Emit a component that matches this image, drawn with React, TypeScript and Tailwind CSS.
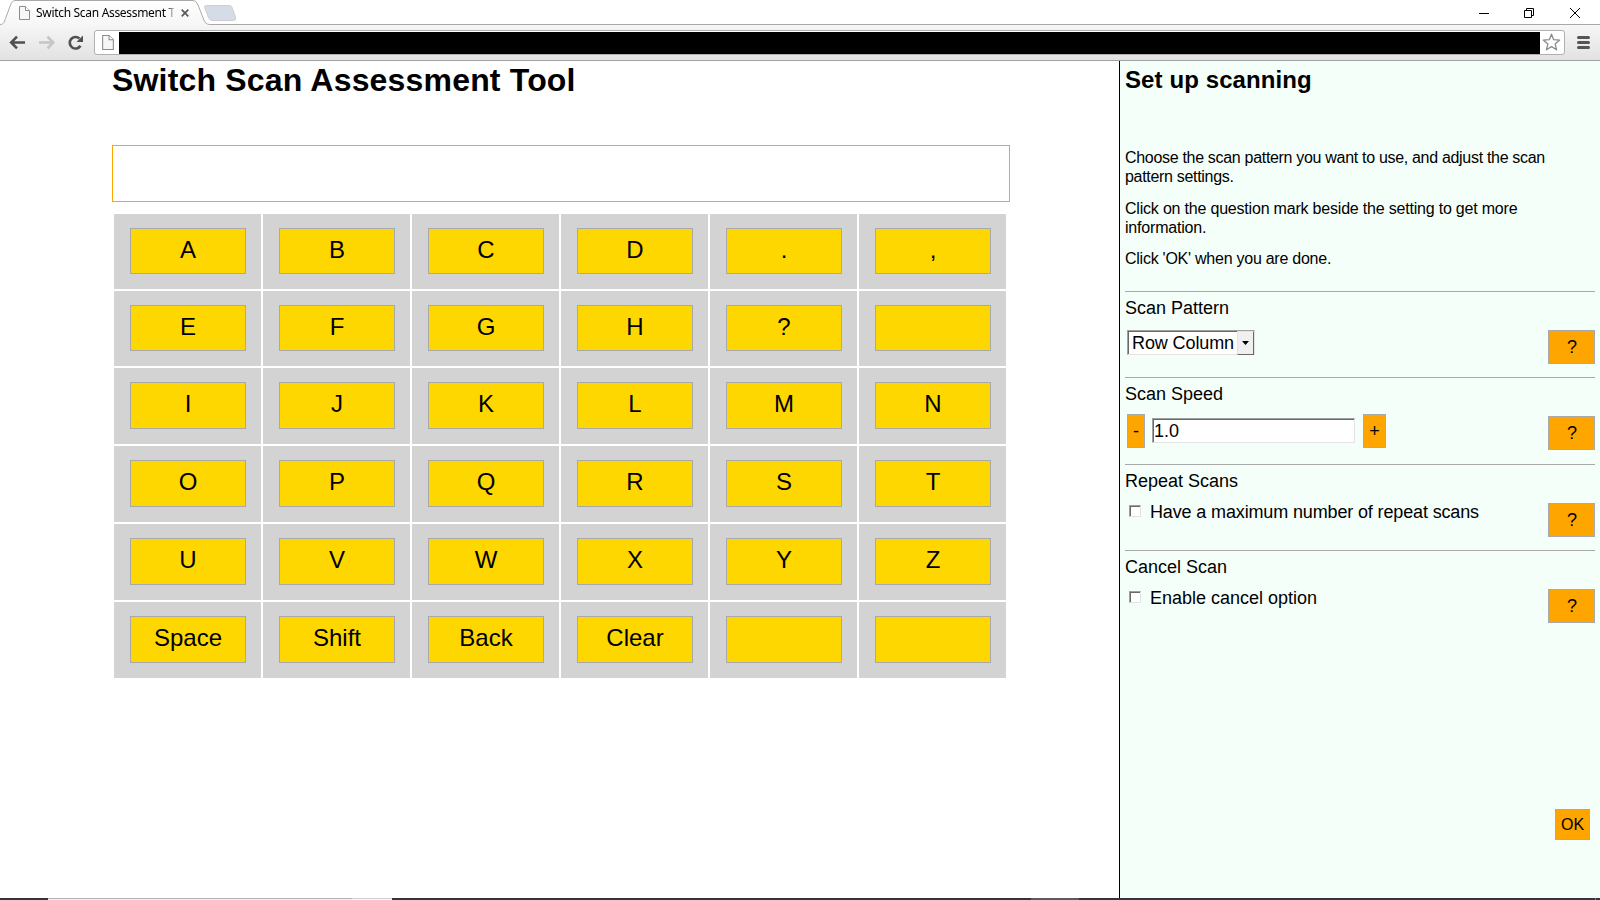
import React, { useState } from "react";

const ROWS: { h: string; key: string; labels: string[] }[] = [
  { h: "h-[75px]", key: "h-[46px] pb-[2px]", labels: ["A", "B", "C", "D", ".", ","] },
  { h: "h-[75px]", key: "h-[46px] pb-[2px]", labels: ["E", "F", "G", "H", "?", ""] },
  { h: "h-[76px]", key: "h-[47px] pb-[3px]", labels: ["I", "J", "K", "L", "M", "N"] },
  { h: "h-[76px]", key: "h-[47px] pb-[3px]", labels: ["O", "P", "Q", "R", "S", "T"] },
  { h: "h-[76px]", key: "h-[47px] pb-[3px]", labels: ["U", "V", "W", "X", "Y", "Z"] },
  { h: "h-[76px]", key: "h-[47px] pb-[3px]", labels: ["Space", "Shift", "Back", "Clear", "", ""] },
];

function PageIcon({ className }: { className: string }) {
  return (
    <svg className={className} viewBox="0 0 11 14" fill="#f7f7f7" stroke="#8c8c8c" strokeWidth="1">
      <path d="M.5.5h6l4 4v9H.5z" />
      <path d="M6.5.5v4h4" fill="#fff" />
    </svg>
  );
}

function TabStrip() {
  return (
    <div className="relative flex h-[25px] bg-white">
      <svg className="absolute left-0 top-0 h-[25px] w-[1600px]" viewBox="0 0 1600 25" fill="none">
        <defs>
          <linearGradient id="tab" x1="0" y1="0" x2="0" y2="1">
            <stop offset="0" stopColor="#fff" />
            <stop offset="1" stopColor="#f6f6f6" />
          </linearGradient>
        </defs>
        <path d="M0 24.500C4 24.500 4 22 5.500 18.500L10.500 5C12 1.500 13 .5 16 .5H192C195.500 .5 196.500 2 198 5L203.500 19C205 22.500 206 24.500 210 24.500V25H0z" fill="url(#tab)" />
        <path d="M0 24.500C4 24.500 4 22 5.500 18.500L10.500 5C12 1.500 13 .5 16 .5H192C195.500 .5 196.500 2 198 5L203.500 19C205 22.500 206 24.500 210 24.500H1600" stroke="#a9a9a9" />
        <path d="M206.500 5.500H229C231.500 5.500 232 7 232.500 8.500L235.500 17.500C236 19.500 235.500 20.500 233.500 20.500H213C210.500 20.500 209.500 19.500 208.500 17.500L205 8.500C204 6.500 204.500 5.500 206.500 5.500z" fill="#d5dce5" stroke="#c9ced5" />
      </svg>
      <div className="relative flex w-[200px] items-center pl-[19px]">
        <PageIcon className="h-[14px] w-[11px]" />
        <span className="ml-[6px] w-[138px] whitespace-nowrap bg-linear-to-r from-black from-93% to-[#cccccc] bg-clip-text font-['Noto_Sans'] text-[12px] tracking-[-0.31px] text-transparent">
          Switch Scan Assessment T
        </span>
        <svg className="ml-[7px] h-[8px] w-[8px]" viewBox="0 0 8 8" stroke="#5a5a5a" strokeWidth="1.700">
          <path d="M.7.7l6.600 6.600M7.300.7L.7 7.300" />
        </svg>
      </div>
      <svg className="ml-auto mr-[19px] mt-[7px] h-[12px] w-[103px]" viewBox="0 0 103 12" fill="none" stroke="#000">
        <path d="M1 6.500h10M46.500 3.500h7v7h-7zM48.500 3.500v-2h7v7h-2M92 1l10 10M102 1L92 11" />
      </svg>
    </div>
  );
}

function Toolbar() {
  return (
    <div className="flex h-[36px] items-start border-b border-[#a3a3a3] bg-linear-to-b from-[#f6f6f6] to-[#e2e2e2]">
      <svg className="ml-[9px] mt-[10px] h-[16px] w-[77px]" viewBox="0 0 77 16" fill="none" strokeWidth="2.600">
        <path d="M16 7.500H3M8 1.700L2.200 7.500 8 13.300" stroke="#505050" />
        <path d="M30 7.500h13M38.500 1.700l5.800 5.800-5.800 5.800" stroke="#c5c5c5" />
        <path d="M71.500 10.800A5.800 5.800 0 1 1 70.500 3.500" stroke="#505050" />
        <path d="M74 .5v6.500h-6.500z" fill="#505050" />
      </svg>
      <div className="ml-[8px] mt-[5px] flex h-[25px] w-[1471px] items-start rounded-[3px] border border-[#b0b0b0] bg-white pl-[7px]">
        <PageIcon className="mt-[4px] h-[15px] w-[12px] shrink-0" />
        <div className="ml-[5px] mt-px h-[22px] w-[1421px] shrink-0 bg-black" />
        <svg className="ml-[2px] mt-[2px] h-[19px] w-[19px] shrink-0" viewBox="0 0 19 19" fill="#fff" stroke="#8a8a8a" strokeWidth="1.300" strokeLinejoin="round">
          <path d="M9.500 1.200l2.200 5.500 6 .4-4.600 3.800 1.500 5.900-5.100-3.200-5.100 3.200 1.500-5.900L1.300 7.100l6-.4z" />
        </svg>
      </div>
      <svg className="ml-[12px] mt-[11px] h-[13px] w-[13px]" viewBox="0 0 13 13" stroke="#555" strokeWidth="3" strokeLinecap="round">
        <path d="M1.500 1.500h10M1.500 6.500h10M1.500 11.500h10" />
      </svg>
    </div>
  );
}

function Keyboard() {
  return (
    <div className="mt-[12px] ml-[2px] flex w-[892px] flex-col gap-[2px]">
      {ROWS.map((row, r) => (
        <div key={r} className="grid grid-cols-6 gap-[2px]">
          {row.labels.map((label, c) => (
            <div key={c} className={`flex items-start bg-[#d3d3d3] pl-[16px] pt-[14px] ${row.h}`}>
              <button className={`w-[116px] border border-[#a9a9a9] bg-[#ffd700] text-[24px] leading-[42px] ${row.key}`}>
                {label}
              </button>
            </div>
          ))}
        </div>
      ))}
    </div>
  );
}

function Setting({ title, className, children }: { title: string; className: string; children: React.ReactNode }) {
  return (
    <section className={`border-t border-[#a9a9a9] pt-[6px] ${className}`}>
      <h3 className="text-[18px] leading-[21px]">{title}</h3>
      <div className="mt-[11px] flex items-start justify-between">
        {children}
        <button className="h-[34px] w-[47px] border border-[#a9a9a9] bg-[#ffa500] pl-px text-[18px]">?</button>
      </div>
    </section>
  );
}

const SUNKEN = "border border-t-[#a0a0a0] border-l-[#a0a0a0] border-r-[#e3e3e3] border-b-[#e3e3e3] bg-white shadow-[inset_1px_1px_0_#696969]";

function Check({ label, className }: { label: string; className?: string }) {
  const [on, setOn] = useState(false);
  return (
    <label className="-mt-[3px] ml-[4px] flex items-start text-[18px] leading-[21px]">
      <input
        type="checkbox"
        checked={on}
        onChange={() => setOn(!on)}
        className={`mt-[5px] h-[12px] w-[12px] appearance-none checked:bg-gray-500 ${SUNKEN}`}
      />
      <span className={`ml-[9px] mt-[2px] ${className ?? ""}`}>{label}</span>
    </label>
  );
}

function Sidebar() {
  const [speed, setSpeed] = useState(1);
  const step = "h-[34px] border border-[#a9a9a9] bg-[#ffa500] text-[18px]";
  return (
    <aside className="flex w-[481px] flex-col border-l border-black bg-[#f5fffa] pl-[5px] pr-[5px]">
      <h2 className="mt-[5px] text-[24px] font-bold leading-[28px] tracking-[0.1px]">Set up scanning</h2>
      <div className="mt-[54px] flex h-[143px] flex-col text-[16px] leading-[19px]">
        <p className="tracking-[-0.31px]">Choose the scan pattern you want to use, and adjust the scan<br />pattern settings.</p>
        <p className="mt-[13px] tracking-[-0.2px]">Click on the question mark beside the setting to get more<br />information.</p>
        <p className="mt-[12px] tracking-[-0.25px]">Click 'OK' when you are done.</p>
      </div>
      <Setting title="Scan Pattern" className="h-[86px]">
        <div className={`ml-[2px] flex h-[25px] w-[128px] pl-[4px] text-[18px] leading-[25px] ${SUNKEN}`}>
          <span className="w-[106px] whitespace-nowrap tracking-[-0.1px]">Row Column</span>
          <span className="flex h-[24px] w-[17px] shrink-0 items-center justify-center border border-t-[#e3e3e3] border-l-[#e3e3e3] border-r-[#696969] border-b-[#696969] bg-[#f0f0f0]">
            <svg className="h-[4px] w-[7px]" viewBox="0 0 7 4"><path d="M0 0h7L3.500 4z" /></svg>
          </span>
        </div>
      </Setting>
      <Setting title="Scan Speed" className="h-[87px]">
        <div className="-mt-[2px] ml-[2px] flex items-start">
          <button className={`w-[18px] ${step}`} onClick={() => setSpeed(speed - 0.1)}>-</button>
          <div className={`ml-[7px] mt-[4px] h-[25px] w-[203px] pl-px text-[18px] leading-[25px] ${SUNKEN}`}>{speed.toFixed(1)}</div>
          <button className={`ml-[8px] w-[23px] ${step}`} onClick={() => setSpeed(speed + 0.1)}>+</button>
        </div>
      </Setting>
      <Setting title="Repeat Scans" className="h-[86px]">
        <Check label="Have a maximum number of repeat scans" className="tracking-[-0.14px]" />
      </Setting>
      <Setting title="Cancel Scan" className="h-[86px]">
        <Check label="Enable cancel option" />
      </Setting>
      <button className="mt-[173px] mr-[5px] h-[31px] w-[35px] self-end border border-[#a9a9a9] bg-[#ffa500] text-[16px]">OK</button>
    </aside>
  );
}

export default function App() {
  return (
    <div className="flex h-[900px] w-[1600px] flex-col overflow-hidden bg-white font-['Liberation_Sans',Arial,sans-serif] text-black">
      <TabStrip />
      <Toolbar />
      <div className="flex h-[837px]">
        <main className="flex w-[1119px] flex-col pl-[112px]">
          <h1 className="mt-px text-[32px] font-bold leading-[37px] tracking-[0.18px]">Switch Scan Assessment Tool</h1>
          <div className="mt-[46px] h-[57px] w-[898px] border border-[#ffa500]" />
          <Keyboard />
        </main>
        <Sidebar />
      </div>
      <div className="flex h-[2px] bg-[#363436]">
        <div className="ml-[48px] h-[2px] w-[304px] border-t border-[#b4b4b4] bg-[#f0f0f0]" />
        <div className="h-[2px] w-[40px] border-t border-[#cfcfcf] bg-[#fafafa]" />
        <div className="ml-[639px] h-[2px] w-[48px] bg-[#5c5a5c]" />
        <div className="ml-auto mr-[4px] h-[2px] w-px bg-[#777]" />
      </div>
    </div>
  );
}
